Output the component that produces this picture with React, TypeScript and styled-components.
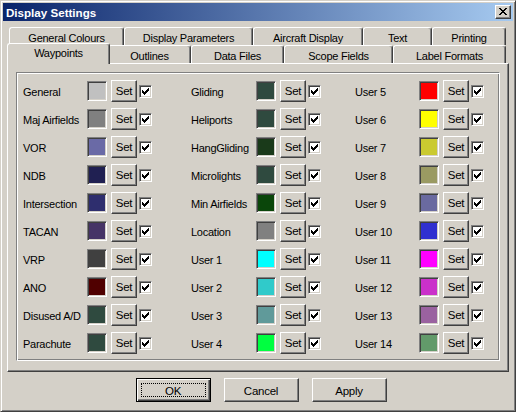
import React from "react";
import styled, { createGlobalStyle, css } from "styled-components";

const Global = createGlobalStyle`
  html, body { margin: 0; padding: 0; background: #D4D0C8; }
  body { font-family: "Liberation Sans", Arial, sans-serif; font-size: 11px; color: #000; letter-spacing: -0.25px; }
  * { box-sizing: border-box; }
`;

const Window = styled.div`
  width: 516px;
  height: 412px;
  background: #D4D0C8;
  border: 1px solid;
  border-color: #D4D0C8 #404040 #404040 #D4D0C8;
  box-shadow: inset 1px 1px #fff, inset -1px -1px #808080;
  padding: 2px;
  display: flex;
  flex-direction: column;
`;

const TitleBar = styled.div`
  height: 18px;
  background: linear-gradient(to right, #0A246A, #A6CAF0);
  display: flex;
  align-items: center;
  justify-content: space-between;
  padding: 0 2px 0 2px;
`;

const Title = styled.span`
  color: #fff;
  font-weight: bold;
  font-size: 11.6px;
  letter-spacing: 0;
  padding-left: 1px;
`;

const CloseBtn = styled.div`
  width: 16px;
  height: 14px;
  background: #D4D0C8;
  border: 1px solid;
  border-color: #fff #404040 #404040 #fff;
  box-shadow: inset -1px -1px #808080;
  display: flex;
  align-items: center;
  justify-content: center;
  padding-bottom: 1px;
`;

const Body = styled.div`
  flex: 1;
  display: flex;
  flex-direction: column;
  padding: 6px 3px 0 4px;
`;

const TabRow = styled.div`
  display: flex;
  height: 18px;
  padding-left: 2px;
  align-items: flex-start;
`;

const Tab = styled.div<{ $w: number; $active?: boolean }>`
  width: ${(p) => p.$w}px;
  height: 18px;
  flex: none;
  background: #D4D0C8;
  border-top: 1px solid #fff;
  border-left: 1px solid #fff;
  border-right: 1px solid #404040;
  border-radius: 3px 3px 0 0;
  box-shadow: inset -1px 0 #808080;
  display: flex;
  align-items: center;
  justify-content: center;
  padding-top: 2px;
  white-space: nowrap;
  ${(p) =>
    p.$active &&
    css`
      width: ${p.$w + 4}px;
      height: 21px;
      margin: -2px -2px -1px -2px;
      position: relative;
      z-index: 1;
      align-items: flex-start;
      padding-top: 3px;
    `}
`;

const Panel = styled.div`
  height: 309px;
  width: 502px;
  border: 1px solid;
  border-color: #fff #404040 #404040 #fff;
  box-shadow: inset -1px -1px #808080;
  padding: 8px 8px 10px 8px;
`;

const Group = styled.div`
  height: 289px;
  border: 1px solid;
  border-color: #808080 #fff #fff #808080;
  box-shadow: inset 1px 1px #fff, inset -1px -1px #808080;
  padding: 4px 0 3px 6px;
  display: grid;
  grid-template-columns: 168px 164px 1fr;
`;

const Column = styled.div`
  display: flex;
  flex-direction: column;
`;

const Row = styled.div`
  height: 28px;
  display: flex;
  align-items: center;
`;

const Label = styled.span<{ $w: number }>`
  width: ${(p) => p.$w}px;
  white-space: nowrap;
  padding-top: 2px;
`;

const Swatch = styled.div<{ $c: string }>`
  width: 20px;
  height: 20px;
  margin-right: 4px;
  background: ${(p) => p.$c};
  border: 1px solid;
  border-color: #808080 #fff #fff #808080;
  box-shadow: inset 1px 1px #404040, inset -1px -1px #D4D0C8;
`;

const raised = css`
  background: #D4D0C8;
  border: 1px solid;
  border-color: #fff #404040 #404040 #fff;
  box-shadow: inset -1px -1px #808080;
`;

const SetBtn = styled.div`
  ${raised};
  width: 26px;
  height: 22px;
  margin-right: 2px;
  display: flex;
  align-items: center;
  justify-content: center;
  font-size: 11.5px;
  padding-bottom: 1px;
`;

const Check = styled.div`
  width: 13px;
  height: 13px;
  background: #fff;
  border: 1px solid;
  border-color: #808080 #fff #fff #808080;
  box-shadow: inset 1px 1px #404040, inset -1px -1px #D4D0C8;
  display: flex;
  align-items: center;
  justify-content: center;
`;

const Footer = styled.div`
  display: flex;
  justify-content: center;
  gap: 13px;
  padding: 6px 0 0 5px;
`;

const Button = styled.div<{ $default?: boolean }>`
  ${raised};
  width: 75px;
  height: 24px;
  display: flex;
  align-items: center;
  justify-content: center;
  padding-top: 1px;
  font-size: 11.5px;
  position: relative;
  ${(p) =>
    p.$default &&
    css`
      border: 1px solid #000;
      box-shadow: inset 1px 1px #fff, inset -1px -1px #404040, inset -2px -2px #808080;
    `}
`;

const FocusRect = styled.div`
  position: absolute;
  inset: 4px;
  border: 1px dotted #000;
`;

const CheckMark = () => (
  <svg width="7" height="7" viewBox="0 0 7 7" shapeRendering="crispEdges">
    <path
      d="M0 2h1v1h1v1h1v-1h1v-1h1v-1h1v-1h1v3h-1v1h-1v1h-1v1h-1v1h-1v-1h-1v-1h-1z"
      fill="#000"
    />
  </svg>
);

const CloseGlyph = () => (
  <svg width="8" height="7" viewBox="0 0 8 7" shapeRendering="crispEdges">
    <path
      d="M0 0h2v1h1v1h2v-1h1v-1h2v1h-1v1h-1v1h-1v1h1v1h1v1h1v1h-2v-1h-1v-1h-2v1h-1v1h-2v-1h1v-1h1v-1h1v-1h-1v-1h-1v-1h-1z"
      fill="#000"
    />
  </svg>
);

type Item = [string, string];

const columns: { items: Item[]; lw: number }[] = [
  {
    lw: 64,
    items: [
      ["General", "#C0C0C0"],
      ["Maj Airfields", "#808080"],
      ["VOR", "#6A6AA6"],
      ["NDB", "#202052"],
      ["Intersection", "#2E2E6E"],
      ["TACAN", "#463466"],
      ["VRP", "#404040"],
      ["ANO", "#500000"],
      ["Disused A/D", "#2F4A3F"],
      ["Parachute", "#2F4A3F"],
    ],
  },
  {
    lw: 65,
    items: [
      ["Gliding", "#2F4A3F"],
      ["Heliports", "#2F4A3F"],
      ["HangGliding", "#1A3A1A"],
      ["Microlights", "#2F4A3F"],
      ["Min Airfields", "#0A460A"],
      ["Location", "#808080"],
      ["User 1", "#00FFFF"],
      ["User 2", "#30CACA"],
      ["User 3", "#609A9A"],
      ["User 4", "#00FF40"],
    ],
  },
  {
    lw: 64,
    items: [
      ["User 5", "#FF0000"],
      ["User 6", "#FFFF00"],
      ["User 7", "#CACA30"],
      ["User 8", "#9A9A62"],
      ["User 9", "#6A6AA0"],
      ["User 10", "#3030D0"],
      ["User 11", "#FF00FF"],
      ["User 12", "#CA30CA"],
      ["User 13", "#9A62A0"],
      ["User 14", "#629A6A"],
    ],
  },
];

const row1: [string, number][] = [
  ["General Colours", 115],
  ["Display Parameters", 129],
  ["Aircraft Display", 110],
  ["Text", 69],
  ["Printing", 74],
];

const row2: [string, number, boolean][] = [
  ["Waypoints", 99, true],
  ["Outlines", 83, false],
  ["Data Files", 93, false],
  ["Scope Fields", 109, false],
  ["Label Formats", 113, false],
];

export default function App() {
  return (
    <>
      <Global />
      <Window>
        <TitleBar>
          <Title>Display Settings</Title>
          <CloseBtn>
            <CloseGlyph />
          </CloseBtn>
        </TitleBar>
        <Body>
          <TabRow>
            {row1.map(([t, w]) => (
              <Tab key={t} $w={w}>
                {t}
              </Tab>
            ))}
          </TabRow>
          <TabRow>
            {row2.map(([t, w, a]) => (
              <Tab key={t} $w={w} $active={a}>
                {t}
              </Tab>
            ))}
          </TabRow>
          <Panel>
            <Group>
              {columns.map((col, ci) => (
                <Column key={ci}>
                  {col.items.map(([name, color]) => (
                    <Row key={name}>
                      <Label $w={col.lw}>{name}</Label>
                      <Swatch $c={color} />
                      <SetBtn>Set</SetBtn>
                      <Check>
                        <CheckMark />
                      </Check>
                    </Row>
                  ))}
                </Column>
              ))}
            </Group>
          </Panel>
          <Footer>
            <Button $default>
              OK
              <FocusRect />
            </Button>
            <Button>Cancel</Button>
            <Button>Apply</Button>
          </Footer>
        </Body>
      </Window>
    </>
  );
}
